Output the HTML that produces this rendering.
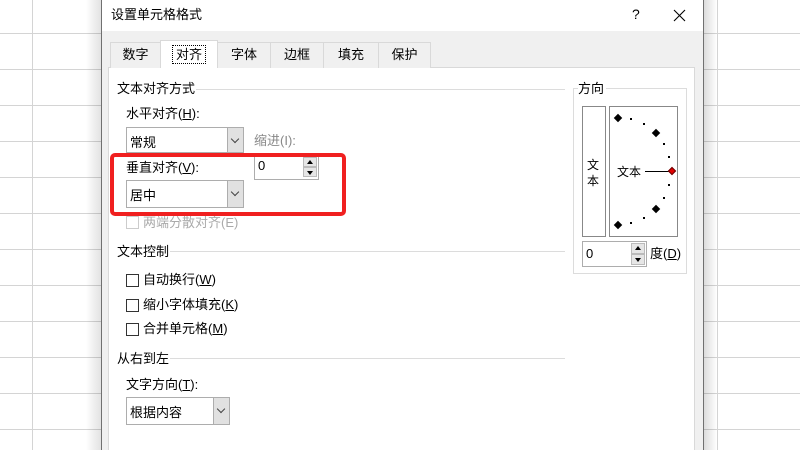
<!DOCTYPE html>
<html><head><meta charset="utf-8"><style>
*{margin:0;padding:0;box-sizing:border-box}
body{width:800px;height:450px;overflow:hidden;background:#fff;position:relative;font-family:"Liberation Sans","Noto Sans CJK SC",sans-serif;font-size:12px;color:#000}
.a{position:absolute}
.h{position:absolute;left:0;width:800px;height:1px;background:#d4d4d4}
.v{position:absolute;top:0;height:450px;width:1px;background:#d4d4d4}
.t{position:absolute;white-space:nowrap;line-height:14px}
.tab{position:absolute;top:42px;height:26px;border:1px solid #d9d9d9;border-bottom:none;background:#f0f0f0;text-align:center;line-height:24px;font-size:13px}
.dd{position:absolute;border:1px solid #adadad;background:#fff}
.dd .arr{position:absolute;right:0;top:0;bottom:0;width:16px;background:#e1e1e1;border-left:1px solid #adadad}
.dd .arr:after{content:"";position:absolute;left:4px;top:8px;width:5px;height:5px;border-right:1px solid #444;border-bottom:1px solid #444;transform:rotate(45deg)}
.dd span{position:absolute;left:3px;top:4px;font-size:13px}
.grp{position:absolute;height:1px;background:#dcdcdc}
.cb{position:absolute;width:13px;height:13px;border:1px solid #333;background:#fff}
.spin{position:absolute;border:1px solid #adadad;background:#fff}
.spin .b{position:absolute;right:1px;width:14px;height:10px;background:#e6e6e6;border:1px solid #bbb}
.spin .u:after,.spin .d:after{content:"";position:absolute;left:3px;width:0;height:0;border-left:3px solid transparent;border-right:3px solid transparent}
.spin .u:after{top:2px;border-bottom:4px solid #000}
.spin .d:after{top:3px;border-top:4px solid #000}
.dot{position:absolute;width:2px;height:2px;background:#000}
.dia{position:absolute;width:6px;height:6px;background:#000;transform:rotate(45deg)}
</style></head><body>
<div class="v" style="left:32px"></div><div class="v" style="left:717px"></div>
<div class="h" style="top:33px"></div><div class="h" style="top:69px"></div><div class="h" style="top:105px"></div><div class="h" style="top:141px"></div><div class="h" style="top:177px"></div><div class="h" style="top:213px"></div><div class="h" style="top:249px"></div><div class="h" style="top:285px"></div><div class="h" style="top:321px"></div><div class="h" style="top:357px"></div><div class="h" style="top:393px"></div><div class="h" style="top:429px"></div>
<div class="a" style="left:86px;top:0;width:16px;height:450px;background:linear-gradient(to right,rgba(0,0,0,0),rgba(0,0,0,0.12))"></div>
<div class="a" style="left:703px;top:0;width:14px;height:450px;background:linear-gradient(to right,rgba(0,0,0,0.15),rgba(0,0,0,0))"></div>
<div class="a" style="left:101px;top:0;width:603px;height:450px;background:#f0f0f0;border-left:1px solid #707070;border-right:1px solid #707070"></div>
<div class="a" style="left:102px;top:0;width:601px;height:31px;background:#fff"></div>
<div class="t" style="left:111px;top:8px;font-size:13px">设置单元格格式</div>
<div class="t" style="left:632px;top:7px;font-size:14px">?</div>
<svg class="a" style="left:673px;top:9px" width="13" height="13"><path d="M1 1L12 12M12 1L1 12" stroke="#000" stroke-width="1.1"/></svg>
<div class="a" style="left:108px;top:67px;width:587px;height:383px;background:#fff;border:1px solid #d9d9d9;border-bottom:none"></div>
<div class="tab" style="left:110px;width:51px">数字</div>
<div class="tab" style="left:160px;width:58px;top:40px;height:28px;background:#fff;line-height:28px"><span style="outline:1px dotted #000;padding:1px 3px">对齐</span></div>
<div class="tab" style="left:217px;width:54px">字体</div>
<div class="tab" style="left:270px;width:54px">边框</div>
<div class="tab" style="left:323px;width:56px">填充</div>
<div class="tab" style="left:378px;width:53px">保护</div>
<div class="t" style="left:117px;top:82px;font-size:13px">文本对齐方式</div><div class="grp" style="left:196px;top:89px;width:369px"></div>
<div class="t" style="left:126px;top:107px;font-size:13px">水平对齐(<u>H</u>):</div>
<div class="dd" style="left:126px;top:127px;width:118px;height:26px"><span>常规</span><div class="arr"></div></div>
<div class="t" style="left:254px;top:134px;color:#888;font-size:13px">缩进(I):</div>
<div class="t" style="left:126px;top:161px;font-size:13px">垂直对齐(<u>V</u>):</div>
<div class="spin" style="left:254px;top:155px;width:65px;height:25px"><span class="t" style="left:3px;top:3px;font-size:13px">0</span><div class="b u" style="top:1px"></div><div class="b d" style="top:11px"></div></div>
<div class="dd" style="left:126px;top:180px;width:118px;height:28px"><span>居中</span><div class="arr"></div></div>
<div class="cb" style="left:126px;top:216px;border-color:#ccc"></div><div class="t" style="left:143px;top:216px;color:#aaa;font-size:13px">两端分散对齐(E)</div>
<div class="a" style="left:110px;top:153px;width:236px;height:63px;border:4px solid #f02020;border-radius:5px"></div>
<div class="t" style="left:117px;top:245px;font-size:13px">文本控制</div><div class="grp" style="left:170px;top:251px;width:395px"></div>
<div class="cb" style="left:126px;top:274px"></div><div class="t" style="left:143px;top:273px;font-size:13px">自动换行(<u>W</u>)</div>
<div class="cb" style="left:126px;top:299px"></div><div class="t" style="left:143px;top:298px;font-size:13px">缩小字体填充(<u>K</u>)</div>
<div class="cb" style="left:126px;top:323px"></div><div class="t" style="left:143px;top:322px;font-size:13px">合并单元格(<u>M</u>)</div>
<div class="t" style="left:117px;top:352px;font-size:13px">从右到左</div><div class="grp" style="left:170px;top:358px;width:395px"></div>
<div class="t" style="left:126px;top:378px;font-size:13px">文字方向(<u>T</u>):</div>
<div class="dd" style="left:126px;top:397px;width:104px;height:28px"><span>根据内容</span><div class="arr"></div></div>
<div class="a" style="left:573px;top:88px;width:114px;height:186px;border:1px solid #dcdcdc"></div>
<div class="t" style="left:578px;top:82px;background:#fff;padding-right:2px;font-size:13px">方向</div>
<div class="a" style="left:582px;top:106px;width:24px;height:131px;border:1px solid #888"></div>
<div class="t" style="left:587px;top:157px;line-height:16px;font-size:12px">文<br>本</div>
<div class="a" style="left:609px;top:106px;width:69px;height:131px;border:1px solid #888"></div>
<div class="t" style="left:617px;top:165px">文本</div>
<div class="a" style="left:645px;top:171px;width:25px;height:1px;background:#000"></div>
<div class="dia" style="left:669px;top:168px;background:#e00000;border:1px solid #600"></div>
<div class="dia" style="left:615px;top:115px"></div><div class="dia" style="left:653px;top:130px"></div><div class="dia" style="left:653px;top:206px"></div><div class="dia" style="left:615px;top:222px"></div>
<div class="dot" style="left:630px;top:118px"></div><div class="dot" style="left:643px;top:123px"></div><div class="dot" style="left:663px;top:143px"></div><div class="dot" style="left:668px;top:156px"></div><div class="dot" style="left:668px;top:184px"></div><div class="dot" style="left:663px;top:197px"></div><div class="dot" style="left:643px;top:217px"></div><div class="dot" style="left:630px;top:222px"></div>
<div class="spin" style="left:582px;top:241px;width:65px;height:26px"><span class="t" style="left:3px;top:5px;font-size:13px">0</span><div class="b u" style="top:1px;height:11px"></div><div class="b d" style="top:12px;height:11px"></div></div>
<div class="t" style="left:650px;top:247px;font-size:13px">度(<u>D</u>)</div>
</body></html>
